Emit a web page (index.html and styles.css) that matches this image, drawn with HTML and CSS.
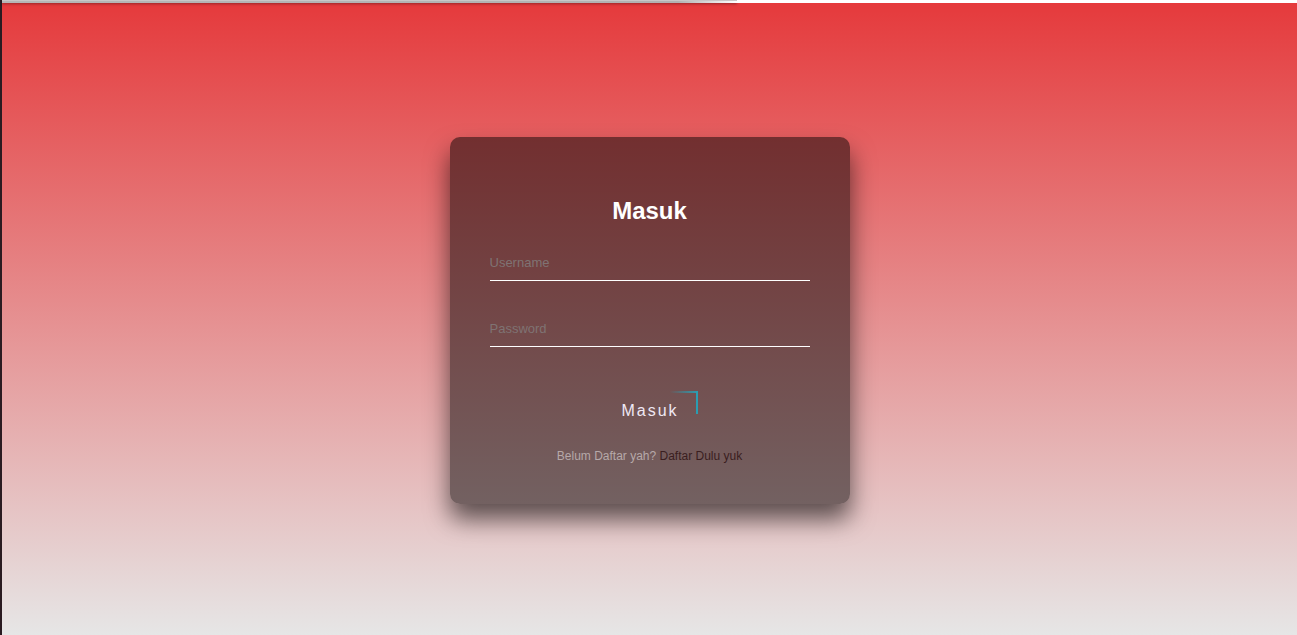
FILE: index.html
```html
<!DOCTYPE html>
<html lang="id">
<head>
<meta charset="utf-8">
<title>Masuk</title>
<link rel="stylesheet" href="styles.css">
</head>
<body>
<div class="edge"></div>
<div class="main">
  <div class="topbar">
    <div class="topbar-shade"></div>
    <div class="topbar-rest"></div>
  </div>
  <div class="stage">
    <form class="login-box">
      <h2 class="title">Masuk</h2>
      <input class="field" type="text" placeholder="Username">
      <input class="field" type="password" placeholder="Password">
      <div class="btn-row">
        <a class="btn" href="#">Masuk<span class="line-top"></span><span class="line-right"></span></a>
      </div>
      <p class="footer">Belum Daftar yah? <a class="footer-link" href="#">Daftar Dulu yuk</a></p>
    </form>
  </div>
</div>
</body>
</html>
```

FILE: styles.css
```css
* { box-sizing: border-box; }
html, body { margin: 0; padding: 0; height: 100%; }
body {
  display: flex;
  height: 100vh;
  font-family: "Liberation Sans", Arial, sans-serif;
  overflow: hidden;
}
.edge { width: 2px; background: #2a1b21; flex: none; }
.main { flex: 1; display: flex; flex-direction: column; }
.topbar { height: 3px; display: flex; flex: none; position: relative; z-index: 2; }
.topbar-shade {
  width: 735px;
  background: linear-gradient(90deg, #b6b6b6 0%, #b2b2b2 92%, #ffffff 100%);
  border-top: 1px solid #c8c8c8;
  box-shadow: 0 1px 3px rgba(0,0,0,0.35);
}
.topbar-rest { flex: 1; background: #ffffff; }
.stage {
  flex: 1;
  background: linear-gradient(#e53a3c, #e6e6e6);
  display: flex;
  align-items: center;
  justify-content: center;
}
.login-box {
  width: 400px;
  padding: 40px 40px 41px;
  background: rgba(0,0,0,0.5);
  border-radius: 10px;
  box-shadow: 0 15px 25px rgba(0,0,0,0.6);
  display: flex;
  flex-direction: column;
  margin-top: 2px;
}
.title {
  margin: 20px 0 20px;
  font-size: 24px;
  line-height: 28px;
  font-weight: bold;
  color: #ffffff;
  text-align: center;
}
.field {
  width: 100%;
  padding: 10px 0;
  font-family: "Liberation Sans", Arial, sans-serif;
  font-size: 13px;
  line-height: 15px;
  height: 36px;
  color: #ffffff;
  border: none;
  border-bottom: 1px solid #ffffff;
  background: transparent;
  outline: none;
  margin: 0 0 30px;
}
.field::placeholder { color: #7f7373; }
.btn-row { display: flex; justify-content: center; margin-top: 14px; }
.btn {
  position: relative;
  display: inline-block;
  padding: 11px 19px 10px 20px;
  font-size: 16px;
  line-height: 18px;
  letter-spacing: 2px;
  color: #efe8f4;
  text-decoration: none;
  overflow: hidden;
}
.line-top {
  position: absolute;
  top: 0;
  right: 0;
  width: 28px;
  height: 2px;
  background: linear-gradient(90deg, rgba(40,150,170,0), #2a9db2);
}
.line-right {
  position: absolute;
  top: 0;
  right: 0;
  width: 2px;
  height: 23px;
  background: #2a9db2;
}
.footer {
  margin: 19px 0 0;
  font-size: 12px;
  line-height: 14px;
  text-align: center;
  color: #b6a9a9;
}
.footer-link { color: #3a1e20; text-decoration: none; }
```
